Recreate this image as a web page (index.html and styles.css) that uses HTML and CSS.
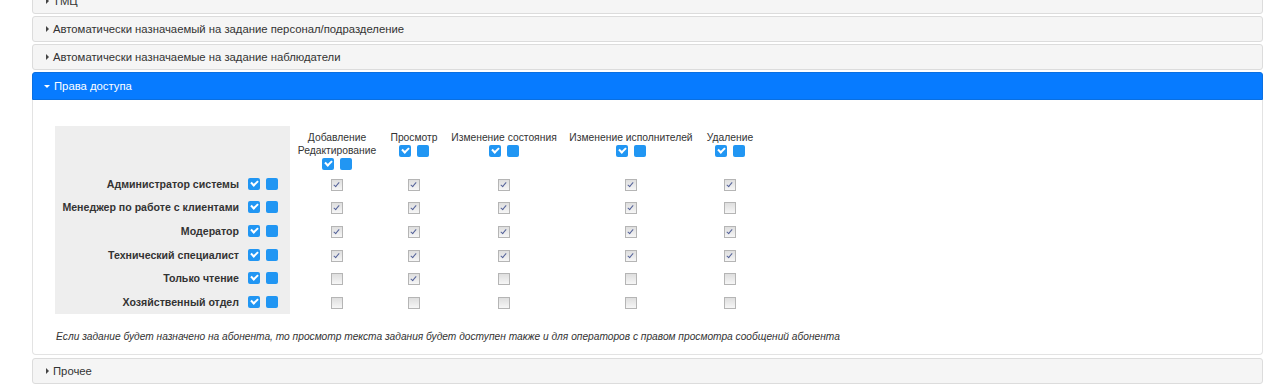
FILE: index.html
```html
<!DOCTYPE html>
<html lang="ru">
<head>
<meta charset="utf-8">
<title>Права доступа</title>
<link rel="stylesheet" href="styles.css">
</head>
<body>
<div class="page">
  <div class="panel"><div class="ph"><span class="tri"></span>ТМЦ</div></div>
  <div class="panel"><div class="ph"><span class="tri"></span>Автоматически назначаемый на задание персонал/подразделение</div></div>
  <div class="panel"><div class="ph"><span class="tri"></span>Автоматически назначаемые на задание наблюдатели</div></div>
  <div class="panel open">
    <div class="ph active"><span class="tri down"></span>Права доступа</div>
    <div class="pb">
      <table class="acl">
        <thead>
          <tr>
            <th class="role"></th>
            <th class="c2"><div>Добавление<br>Редактирование</div><div class="bl"><span class="bchk"></span><span class="bsq"></span></div></th>
            <th class="c3"><div>Просмотр</div><div class="bl"><span class="bchk"></span><span class="bsq"></span></div></th>
            <th class="c4"><div>Изменение состояния</div><div class="bl"><span class="bchk"></span><span class="bsq"></span></div></th>
            <th class="c5"><div>Изменение исполнителей</div><div class="bl"><span class="bchk"></span><span class="bsq"></span></div></th>
            <th class="c6"><div>Удаление</div><div class="bl"><span class="bchk"></span><span class="bsq"></span></div></th>
          </tr>
        </thead>
        <tbody>
          <tr><td class="role">Администратор системы<span class="bchk"></span><span class="bsq"></span></td>
            <td><span class="cb on"></span></td><td><span class="cb on"></span></td><td><span class="cb on"></span></td><td><span class="cb on"></span></td><td><span class="cb on"></span></td></tr>
          <tr><td class="role">Менеджер по работе с клиентами<span class="bchk"></span><span class="bsq"></span></td>
            <td><span class="cb on"></span></td><td><span class="cb on"></span></td><td><span class="cb on"></span></td><td><span class="cb on"></span></td><td><span class="cb"></span></td></tr>
          <tr><td class="role">Модератор<span class="bchk"></span><span class="bsq"></span></td>
            <td><span class="cb on"></span></td><td><span class="cb on"></span></td><td><span class="cb on"></span></td><td><span class="cb on"></span></td><td><span class="cb on"></span></td></tr>
          <tr><td class="role">Технический специалист<span class="bchk"></span><span class="bsq"></span></td>
            <td><span class="cb on"></span></td><td><span class="cb on"></span></td><td><span class="cb on"></span></td><td><span class="cb on"></span></td><td><span class="cb on"></span></td></tr>
          <tr><td class="role">Только чтение<span class="bchk"></span><span class="bsq"></span></td>
            <td><span class="cb"></span></td><td><span class="cb on"></span></td><td><span class="cb"></span></td><td><span class="cb"></span></td><td><span class="cb"></span></td></tr>
          <tr><td class="role">Хозяйственный отдел<span class="bchk"></span><span class="bsq"></span></td>
            <td><span class="cb"></span></td><td><span class="cb"></span></td><td><span class="cb"></span></td><td><span class="cb"></span></td><td><span class="cb"></span></td></tr>
        </tbody>
      </table>
      <p class="note">Если задание будет назначено на абонента, то просмотр текста задания будет доступен также и для операторов с правом просмотра сообщений абонента</p>
    </div>
  </div>
  <div class="panel"><div class="ph"><span class="tri"></span>Прочее</div></div>
</div>
</body>
</html>
```

FILE: styles.css
```css
html, body { margin: 0; padding: 0; background: #fff; }
body { font-family: "Liberation Sans", Arial, sans-serif; color: #333; }
.page { margin: -12px 17px 0 32px; }
.panel { margin-bottom: 2px; }
.ph {
  height: 24px; line-height: 25px;
  background: #f5f5f5; border: 1px solid #dcdcdc; border-radius: 3px;
  font-size: 11.3px; color: #333; padding-left: 13px;
}
.ph.active { background: #077bff; border-color: #0a6fe0; color: #fff; border-radius: 3px 3px 0 0; height: 26px; line-height: 27px; padding-left: 11px; }
.open { margin-bottom: 3px; }
.tri {
  display: inline-block; width: 0; height: 0; vertical-align: 1px;
  border-top: 3px solid transparent; border-bottom: 3px solid transparent;
  border-left: 3px solid #444; margin-right: 4px;
}
.tri.down { border-left: 3px solid transparent; border-right: 3px solid transparent; border-top: 3px solid #fff; border-bottom: 0; vertical-align: 2px; margin-right: 4px; }
.pb {
  border: 1px solid #e3e3e3; border-top: 0; border-radius: 0 0 4px 4px;
  padding: 26px 22px 12px 22px;
}
.acl { border-collapse: collapse; }
.acl th {
  font-weight: normal; font-size: 10.3px; line-height: 13px; color: #333;
  padding: 5px 0 2px; vertical-align: top; text-align: center; white-space: nowrap;
}
.acl th.c2 { width: 94px; }
.acl th.c3 { width: 60px; }
.acl th.c4 { width: 120px; }
.acl th.c5 { width: 134px; }
.acl th.c6 { width: 64px; }
.acl th.role, .acl td.role { background: #eee; }
.acl th.role { width: 235px; padding: 0; }
.acl td {
  height: 23.6px; padding: 0; text-align: center; vertical-align: middle;
  font-size: 11px; line-height: 14px;
}
.acl td.role {
  text-align: right; font-weight: bold; font-size: 10.6px; padding: 0 12px 0 0; white-space: nowrap;
}
.acl td.role .bchk { margin-left: 9px; }
.bl { margin-top: 1px; line-height: 0; }
.bchk, .bsq {
  display: inline-block; width: 12px; height: 12px; border-radius: 2px;
  background: #2196f3; vertical-align: -2px; position: relative;
}
.bsq { margin-left: 6px; }
.bchk::after {
  content: ""; position: absolute; left: 3px; top: 2px; width: 5px; height: 3px;
  border-left: 2px solid #fff; border-bottom: 2px solid #fff; transform: rotate(-45deg);
}
.cb {
  display: inline-block; width: 10px; height: 10px; vertical-align: middle;
  border: 1px solid #b5b5b5; background: linear-gradient(#dedede, #f6f6f6);
  position: relative;
}
.cb.on::after {
  content: ""; position: absolute; left: 3px; top: 1px; width: 2px; height: 5px;
  border-right: 1.5px solid #55639a; border-bottom: 1.5px solid #55639a; transform: rotate(40deg);
}
.note {
  margin: 17px 0 0 1px; font-size: 10.2px; font-style: italic; color: #333;
}
```
